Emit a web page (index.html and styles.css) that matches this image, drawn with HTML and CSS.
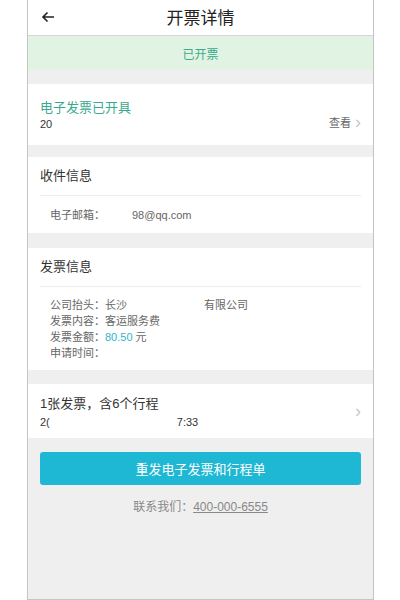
FILE: index.html
```html
<!DOCTYPE html>
<html lang="zh">
<head>
    <meta charset="UTF-8">
    <meta name="viewport" content="width=device-width, initial-scale=1.0">
    <title>开票详情</title>
    <link rel="stylesheet" href="styles.css">
</head>
<body>
    <div class="ponsel">
        <div class="kepala">
            <span class="kembali">
                <svg width="14" height="12" viewBox="0 0 14 12"><path d="M13 6H2M6.5 1.5L2 6l4.5 4.5" fill="none" stroke="#222" stroke-width="1.6"/></svg>
            </span>
            <span class="judul">开票详情</span>
        </div>
        <div class="status">已开票</div>

        <div class="kartu baris-panah k1">
            <div>
                <div class="judul-hijau">电子发票已开具</div>
                <div class="kecil">20</div>
            </div>
            <div class="lihat">查看 <span class="panah">&#8250;</span></div>
        </div>

        <div class="kartu k2">
            <div class="judul-kartu">收件信息</div>
            <div class="isi">
                <div class="baris"><span class="label-lebar">电子邮箱：</span>98@qq.com</div>
            </div>
        </div>

        <div class="kartu">
            <div class="judul-kartu">发票信息</div>
            <div class="isi rapat">
                <div class="baris">公司抬头：长沙<span class="jarak"></span>有限公司</div>
                <div class="baris">发票内容：客运服务费</div>
                <div class="baris">发票金额：<span class="biru">80.50</span> 元</div>
                <div class="baris">申请时间：</div>
            </div>
        </div>

        <div class="kartu baris-panah pendek">
            <div>
                <div class="judul-kartu polos">1张发票，含6个行程</div>
                <div class="kecil">2(<span class="jarak2"></span>7:33</div>
            </div>
            <div class="lihat"><span class="panah">&#8250;</span></div>
        </div>

        <div class="bawah">
            <button class="tombol">重发电子发票和行程单</button>
            <div class="kontak">联系我们：<u>400-000-6555</u></div>
        </div>
    </div>
</body>
</html>
```

FILE: styles.css
```css
body {
    margin: 0;
    background-color: #fff;
    font-family: "Liberation Sans", "Noto Sans CJK SC", sans-serif;
}

.ponsel {
    width: 347px;
    height: 600px;
    margin: 0 0 0 27px;
    box-sizing: border-box;
    border: 1px solid #c4c4c4;
    border-top: none;
    background-color: #efefef;
    overflow: hidden;
}

.kepala {
    height: 35px;
    background-color: #fff;
    border-bottom: 1px solid #d6d6d6;
    display: flex;
    align-items: center;
    justify-content: center;
    position: relative;
}

.kembali {
    position: absolute;
    left: 13px;
    top: 11px;
    display: flex;
}

.judul {
    font-size: 17px;
    color: #222;
    padding-bottom: 3px;
}

.status {
    height: 34px;
    background-color: #e1f3e3;
    color: #3daa8c;
    font-size: 12px;
    display: flex;
    align-items: center;
    justify-content: center;
    margin-bottom: 14px;
}

.kartu {
    background-color: #fff;
    padding: 0 12px;
    margin-bottom: 14px;
}

.kartu.k1 {
    margin-bottom: 12px;
}

.kartu.k2 {
    margin-bottom: 15px;
}

.baris-panah {
    display: flex;
    justify-content: space-between;
    align-items: center;
    height: 61px;
}

.baris-panah.pendek {
    height: 54px;
}

.k1 > div:first-child {
    margin-top: -3px;
}

.judul-hijau {
    color: #3aa890;
    font-size: 13px;
    margin-bottom: 2px;
}

.kecil {
    font-size: 11px;
    color: #333;
}

.lihat {
    font-size: 11px;
    color: #666;
    display: flex;
    align-items: center;
    gap: 4px;
    padding-top: 14px;
}

.pendek .lihat {
    padding-top: 0;
}

.panah {
    color: #c8c8c8;
    font-size: 18px;
    line-height: 1;
}

.judul-kartu {
    font-size: 13px;
    color: #333;
    height: 38px;
    line-height: 38px;
    border-bottom: 1px solid #ececec;
}

.judul-kartu.polos {
    border-bottom: none;
    height: auto;
    line-height: 18px;
    margin-bottom: 3px;
}

.isi {
    padding: 11px 10px 10px;
    font-size: 11px;
    color: #666;
}

.isi.rapat {
    padding: 10px 10px 9px;
}

.baris {
    line-height: 16px;
}

.label-lebar {
    display: inline-block;
    width: 82px;
}

.jarak {
    display: inline-block;
    width: 77px;
}

.jarak2 {
    display: inline-block;
    width: 127px;
}

.biru {
    color: #2fb4c8;
}

.bawah {
    padding: 0 12px;
    text-align: center;
}

.tombol {
    width: 100%;
    height: 33px;
    border: none;
    border-radius: 3px;
    background-color: #1fb8d4;
    color: #fff;
    font-size: 13px;
    font-family: inherit;
}

.kontak {
    margin-top: 12px;
    font-size: 12px;
    color: #888;
}
```
